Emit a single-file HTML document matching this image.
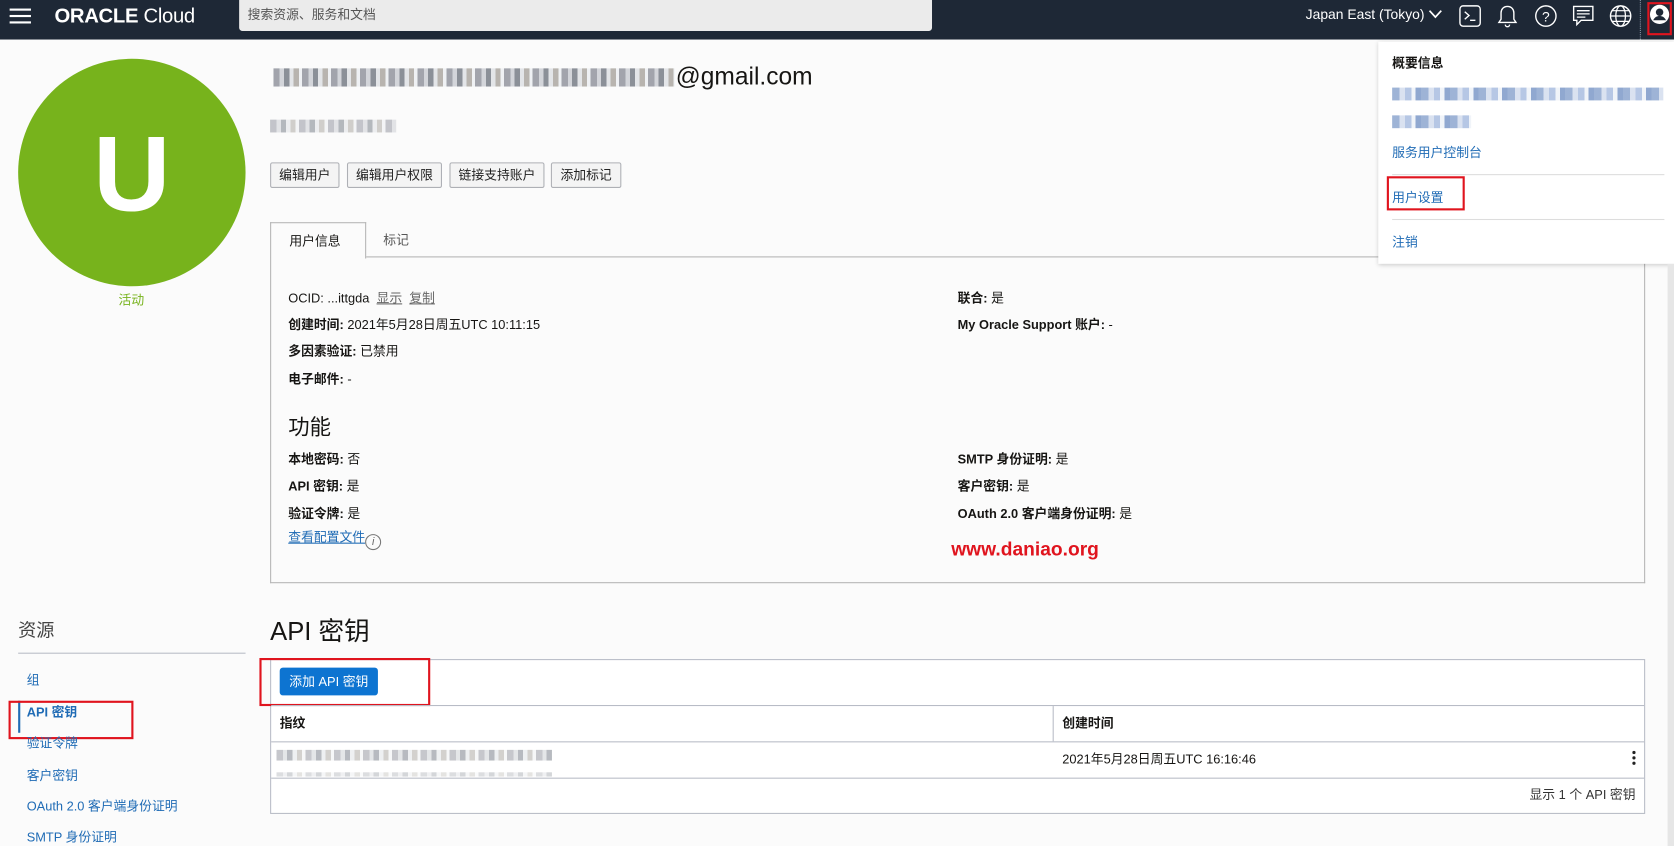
<!DOCTYPE html>
<html><head><meta charset="utf-8"><style>
*{box-sizing:border-box;margin:0;padding:0}
html,body{width:1674px;height:846px;overflow:hidden;background:#fbfbfb}
#w{position:absolute;left:0;top:0;width:1568px;height:792px;transform:scale(1.06760,1.06818);transform-origin:0 0;font-family:"Liberation Sans","Noto Sans CJK SC",sans-serif;color:#161513;font-size:12px}
.a{position:absolute;white-space:nowrap}
.hd{position:absolute;left:0;top:0;width:1568px;height:37px;background:#1e2836}
.blur{position:absolute;background:repeating-linear-gradient(90deg,#8c8f99 0 6px,#c9ccd2 6px 10px,#6f7580 10px 15px,#dde0e4 15px 19px,#a7a39c 19px 24px,#eceff2 24px 27px);opacity:.8}
.bblur{position:absolute;background:repeating-linear-gradient(90deg,#8da6cf 0 7px,#d3ddee 7px 12px,#a9bde0 12px 18px,#eef2f8 18px 22px,#7d99c8 22px 27px);opacity:.85}
.btn{position:absolute;top:152px;height:24px;border:1px solid #aeb0b5;background:#f4f4f4;border-radius:2px;font-size:12px;line-height:22px;text-align:center;color:#222;white-space:nowrap}
.lnk{color:#1f6bb5}
b{font-weight:bold}
</style></head><body><div id="w">
<div class="hd"></div>
<div class="a" style="left:9px;top:8px;width:20px;height:2px;background:#fff;box-shadow:0 6px 0 #fff,0 12px 0 #fff"></div>
<div class="a" style="left:51px;top:5px;color:#fff;font-size:19px;letter-spacing:-0.3px"><span style="font-weight:bold">ORACLE</span> <span style="font-weight:normal">Cloud</span></div>
<div class="a" style="left:224px;top:0;width:649px;height:29px;background:#ebebeb;border-radius:0 0 3px 3px;color:#555;font-size:12px;line-height:29px;padding-left:8px">搜索资源、服务和文档</div>
<div class="a" style="left:1223px;top:6px;color:#fff;font-size:13px">Japan East (Tokyo) <svg width="13" height="9" viewBox="0 0 13 9"><path d="M1 1l5.5 6 5.5-6" stroke="#fff" stroke-width="1.6" fill="none"/></svg></div>
<svg class="a" style="left:1366px;top:4px" width="22" height="22" viewBox="0 0 22 22"><rect x="1.5" y="1.5" width="19" height="19" rx="3" stroke="#fff" fill="none" stroke-width="1.3"/><path d="M6 7l4 3.5-4 3.5M11 15h5" stroke="#fff" fill="none" stroke-width="1.3"/></svg>
<svg class="a" style="left:1402px;top:4px" width="20" height="22" viewBox="0 0 20 22"><path d="M10 2c-4 0-6 3-6 6v6l-2 3h16l-2-3V8c0-3-2-6-6-6zM8 19a2 2 0 004 0" stroke="#fff" fill="none" stroke-width="1.3"/></svg>
<svg class="a" style="left:1437px;top:4px" width="22" height="22" viewBox="0 0 22 22"><circle cx="11" cy="11" r="9.5" stroke="#fff" fill="none" stroke-width="1.3"/><text x="11" y="16" fill="#fff" font-size="13" text-anchor="middle" font-family="Liberation Sans">?</text></svg>
<svg class="a" style="left:1472px;top:4px" width="22" height="22" viewBox="0 0 22 22"><path d="M2 2h18v13H9l-4 4v-4H2z" stroke="#fff" fill="none" stroke-width="1.3"/><path d="M5 6h12M5 9h12M5 12h8" stroke="#fff" stroke-width="1.2"/></svg>
<svg class="a" style="left:1507px;top:4px" width="22" height="22" viewBox="0 0 22 22"><circle cx="11" cy="11" r="9.5" stroke="#fff" fill="none" stroke-width="1.3"/><ellipse cx="11" cy="11" rx="4.5" ry="9.5" stroke="#fff" fill="none" stroke-width="1.2"/><path d="M1.5 11h19M3 6h16M3 16h16" stroke="#fff" stroke-width="1.1"/></svg>
<div class="a" style="left:1536px;top:0;height:37px;border-left:1px dotted #8895a5"></div>
<div class="a" style="left:1543px;top:2px;width:23px;height:31px;border:2px solid #e0141e"></div>
<svg class="a" style="left:1545px;top:4px" width="19" height="19" viewBox="0 0 19 19"><circle cx="9.5" cy="9.5" r="9" fill="#fff"/><circle cx="9.5" cy="7.5" r="3.5" fill="#1e2836"/><path d="M3.5 15c1.5-3 3.5-4 6-4s4.5 1 6 4" fill="#1e2836"/></svg>

<div class="a" style="left:17px;top:55px;width:213px;height:213px;border-radius:50%;background:#77b31c"></div>
<div class="a" style="left:17px;top:108px;width:213px;text-align:center;color:#fff;font-size:100px;font-weight:bold;line-height:110px">U</div>
<div class="a" style="left:111px;top:272px;color:#77b31c;font-size:12px">活动</div>

<div class="blur" style="left:256px;top:64px;width:376px;height:17px"></div>
<div class="a" style="left:633px;top:58px;font-size:23px">@gmail.com</div>
<div class="blur" style="left:253px;top:112px;width:118px;height:12px;opacity:.5"></div>
<div class="btn" style="left:253px;width:65px">编辑用户</div>
<div class="btn" style="left:325px;width:89px">编辑用户权限</div>
<div class="btn" style="left:421px;width:89px">链接支持账户</div>
<div class="btn" style="left:516px;width:66px">添加标记</div>

<div class="a" style="left:253px;top:241px;width:1288px;height:305px;border:1px solid #b5b5b5;border-top:none;background:#fbfbfb"></div>
<div class="a" style="left:253px;top:240px;width:1288px;border-top:1px solid #b5b5b5"></div>
<div class="a" style="left:253px;top:208px;width:90px;height:34px;border:1px solid #b5b5b5;border-bottom:none;background:#fbfbfb;padding:8px 0 0 17px">用户信息</div>
<div class="a" style="left:359px;top:216px;color:#555">标记</div>
<div class="a" style="left:270px;top:270px">OCID: ...ittgda &nbsp;<u style="color:#666">显示</u>&nbsp; <u style="color:#666">复制</u></div>
<div class="a" style="left:270px;top:295px"><b>创建时间:</b> 2021年5月28日周五UTC 10:11:15</div>
<div class="a" style="left:270px;top:320px"><b>多因素验证:</b> 已禁用</div>
<div class="a" style="left:270px;top:346px"><b>电子邮件:</b> -</div>
<div class="a" style="left:270px;top:384px;font-size:20px">功能</div>
<div class="a" style="left:270px;top:421px"><b>本地密码:</b> 否</div>
<div class="a" style="left:270px;top:446px"><b>API 密钥:</b> 是</div>
<div class="a" style="left:270px;top:472px"><b>验证令牌:</b> 是</div>
<div class="a lnk" style="left:270px;top:494px"><u>查看配置文件</u><span style="display:inline-block;width:15px;height:15px;border:1px solid #777;border-radius:50%;font-size:10px;line-height:13px;text-align:center;color:#666;font-style:italic;vertical-align:-3px">i</span></div>
<div class="a" style="left:897px;top:270px"><b>联合:</b> 是</div>
<div class="a" style="left:897px;top:295px"><b>My Oracle Support 账户:</b> -</div>
<div class="a" style="left:897px;top:421px"><b>SMTP 身份证明:</b> 是</div>
<div class="a" style="left:897px;top:446px"><b>客户密钥:</b> 是</div>
<div class="a" style="left:897px;top:472px"><b>OAuth 2.0 客户端身份证明:</b> 是</div>
<div class="a" style="left:891px;top:504px;color:#e0141e;font-size:18px;font-weight:bold;font-family:'Liberation Sans',sans-serif">www.daniao.org</div>

<div class="a" style="left:17px;top:576px;font-size:17px;color:#444">资源</div>
<div class="a" style="left:17px;top:611px;width:213px;border-top:1px solid #b8bcc6"></div>
<div class="a lnk" style="left:25px;top:628px">组</div>
<div class="a" style="left:17px;top:656px;height:30px;border-left:2px solid #1f6bb5"></div>
<div class="a lnk" style="left:25px;top:658px;font-weight:bold">API 密钥</div>
<div class="a" style="left:8px;top:656px;width:117px;height:36px;border:2px solid #e0141e"></div>
<div class="a lnk" style="left:25px;top:687px">验证令牌</div>
<div class="a lnk" style="left:25px;top:717px">客户密钥</div>
<div class="a lnk" style="left:25px;top:746px">OAuth 2.0 客户端身份证明</div>
<div class="a lnk" style="left:25px;top:775px">SMTP 身份证明</div>

<div class="a" style="left:253px;top:571px;font-size:24px">API 密钥</div>
<div class="a" style="left:253px;top:617px;width:1288px;height:145px;border:1px solid #b8bcc6;background:#fff"></div>
<div class="a" style="left:262px;top:625px;width:92px;height:26px;background:#0d74d1;border-radius:3px;color:#fff;text-align:center;line-height:26px">添加 API 密钥</div>
<div class="a" style="left:243px;top:616px;width:160px;height:45px;border:2px solid #e0141e"></div>
<div class="a" style="left:254px;top:660px;width:1286px;border-top:1px solid #b8bcc6"></div>
<div class="a" style="left:254px;top:694px;width:1286px;border-top:1px solid #b8bcc6"></div>
<div class="a" style="left:254px;top:728px;width:1286px;border-top:1px solid #b8bcc6"></div>
<div class="a" style="left:986px;top:661px;height:33px;border-left:1px solid #b8bcc6"></div>
<div class="a" style="left:262px;top:668px;font-weight:bold">指纹</div>
<div class="a" style="left:995px;top:668px;font-weight:bold">创建时间</div>
<div class="blur" style="left:259px;top:702px;width:258px;height:10px;opacity:.5"></div>
<div class="blur" style="left:259px;top:723px;width:258px;height:4px;opacity:.3"></div>
<div class="a" style="left:995px;top:702px">2021年5月28日周五UTC 16:16:46</div>
<div class="a" style="left:1529px;top:703px;width:3px;height:3px;background:#222;border-radius:50%;box-shadow:0 5px 0 #222,0 10px 0 #222"></div>
<div class="a" style="left:1360px;top:735px;width:172px;text-align:right;color:#333">显示 1 个 API 密钥</div>

<div class="a" style="left:1291px;top:39px;width:277px;height:208px;background:#fff;box-shadow:0 1px 4px rgba(0,0,0,.2)"></div>
<div class="a" style="left:1304px;top:50px;font-weight:bold">概要信息</div>
<div class="bblur" style="left:1304px;top:82px;width:254px;height:12px"></div>
<div class="bblur" style="left:1304px;top:108px;width:74px;height:12px"></div>
<div class="a lnk" style="left:1304px;top:134px">服务用户控制台</div>
<div class="a" style="left:1304px;top:163px;width:255px;border-top:1px solid #ddd"></div>
<div class="a lnk" style="left:1304px;top:176px">用户设置</div>
<div class="a" style="left:1299px;top:165px;width:73px;height:32px;border:2px solid #e0141e"></div>
<div class="a" style="left:1304px;top:205px;width:255px;border-top:1px solid #ddd"></div>
<div class="a lnk" style="left:1304px;top:218px">注销</div>
<div class="a" style="left:1562px;top:247px;width:6px;height:545px;background:#e6e6e6"></div>
</div></body></html>
